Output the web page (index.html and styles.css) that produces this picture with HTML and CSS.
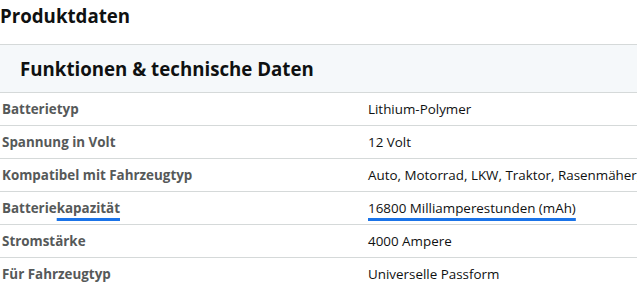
FILE: index.html
```html
<!DOCTYPE html>
<html lang="de">
<head>
  <meta charset="UTF-8">
  <title>Produktdaten</title>
  <link rel="stylesheet" href="styles.css">
</head>
<body>

  <h2 class="page-title">Produktdaten</h2>

  <div class="spec-head">
    <h3>Funktionen &amp; technische Daten</h3>
  </div>

  <table class="spec-table">
    <tbody>
      <tr><th>Batterietyp</th><td>Lithium-Polymer</td></tr>
      <tr><th>Spannung in Volt</th><td>12 Volt</td></tr>
      <tr><th>Kompatibel mit Fahrzeugtyp</th><td>Auto, Motorrad, LKW, Traktor, Rasenmäher, Boot</td></tr>
      <tr><th>Batterie<span class="mark">kapazität</span></th><td><span class="mark">16800 Milliamperestunden (mAh)</span></td></tr>
      <tr><th>Stromstärke</th><td>4000 Ampere</td></tr>
      <tr><th>Für Fahrzeugtyp</th><td>Universelle Passform</td></tr>
    </tbody>
  </table>

</body>
</html>
```

FILE: styles.css
```css
body {
  font-family: "Open Sans", Arial, sans-serif;
  margin: 0;
  color: #0f1111;
  background: #fff;
  overflow: hidden;
}

.page-title {
  font-size: 18.7px;
  font-weight: 700;
  margin: 0;
  padding: 3px 0 0 0;
  height: 44px;
  box-sizing: border-box;
  line-height: 26px;
}

.spec-head {
  background: #f5f8fa;
  border-top: 1px solid #d5d9d9;
  border-bottom: 1px solid #d5d9d9;
  height: 49px;
  box-sizing: border-box;
  display: flex;
  align-items: center;
  padding-left: 20px;
}

.spec-head h3 {
  margin: 0;
  font-size: 18.7px;
  font-weight: 700;
}

.spec-table {
  border-collapse: collapse;
  width: 700px;
}

.spec-table th,
.spec-table td {
  height: 32px;
  padding: 0 2px;
  border-bottom: 1px solid #d5d9d9;
  font-size: 13.4px;
  text-align: left;
  white-space: nowrap;
}

.spec-table th {
  width: 361px;
  color: #565959;
  font-weight: 700;
}

.spec-table td {
  padding-left: 3px;
}

/* blaue Markierung unter dem Text */
.mark {
  text-decoration: underline;
  text-decoration-color: #1a73e8;
  text-decoration-thickness: 3px;
  text-underline-offset: 5px;
}
```
